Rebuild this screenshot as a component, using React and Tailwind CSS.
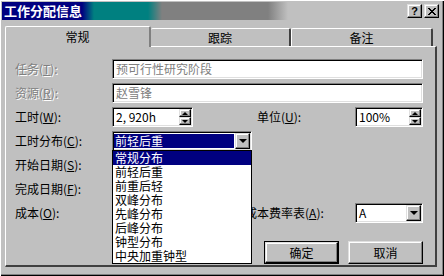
import React from 'react';

// Win98-style 3D edges
const sunken = "border border-t-[#808080] border-l-[#808080] border-b-white border-r-white shadow-[inset_1px_1px_0_#000,inset_-1px_-1px_0_#dfdfdf]";
const raised = "border border-t-[#dfdfdf] border-l-[#dfdfdf] border-b-black border-r-black shadow-[inset_-1px_-1px_0_#808080,inset_1px_1px_0_#fff]";

function Label({ text, keyChar, disabled, className = "" }) {
  return (
    <span
      className={`text-[12px] leading-[14px] whitespace-nowrap ${
        disabled ? "text-[#808080] [text-shadow:1px_1px_0_#fff]" : "text-black"
      } ${className}`}
    >
      {text}(<u>{keyChar}</u>):
    </span>
  );
}

function SpinArrows() {
  return (
    <div className="flex flex-col justify-center gap-0 py-px pr-px">
      <div className={`flex h-[8px] w-[12px] items-center justify-center bg-[#c0c0c0] ${raised}`}>
        <div className="h-0 w-0 border-b-[3px] border-l-[3px] border-r-[3px] border-b-black border-l-transparent border-r-transparent" />
      </div>
      <div className={`flex h-[8px] w-[12px] items-center justify-center bg-[#c0c0c0] ${raised}`}>
        <div className="h-0 w-0 border-t-[3px] border-l-[3px] border-r-[3px] border-t-black border-l-transparent border-r-transparent" />
      </div>
    </div>
  );
}

function Spinner({ value, width }) {
  return (
    <div className={`flex h-[20px] bg-white ${sunken} ${width}`}>
      <span className="flex-1 pl-[3px] pt-[2px] text-[12px] leading-[14px] text-black">{value}</span>
      <SpinArrows />
    </div>
  );
}

function DownButton() {
  return (
    <div className={`flex h-[16px] w-[15px] items-center justify-center bg-[#c0c0c0] ${raised}`}>
      <div className="h-0 w-0 border-t-[4px] border-l-[4px] border-r-[4px] border-t-black border-l-transparent border-r-transparent" />
    </div>
  );
}

const options = ["常规分布", "前轻后重", "前重后轻", "双峰分布", "先峰分布", "后峰分布", "钟型分布", "中央加重钟型"];

export default function App() {
  return (
    <div className="flex h-[276px] w-[444px] flex-col bg-[#c0c0c0] p-[2px] shadow-[inset_1px_1px_0_#fff,inset_-1px_-1px_0_#000,inset_-2px_-2px_0_#808080] [font-family:'Noto_Sans_CJK_SC',sans-serif]">
      {/* Title bar */}
      <div className="flex h-[18px] items-center justify-between bg-[linear-gradient(90deg,#000080_0px,#000080_80px,#008080_92px,#008080_146px,#808080_160px,#808080_266px,#c0c0c0_286px)] pl-[2px] pr-[3px]">
        <span className="text-[13px] font-bold leading-[16px] text-white">工作分配信息</span>
        <div className="flex gap-[2px]">
          <div className={`flex h-[14px] w-[15px] items-center justify-center bg-[#c0c0c0] ${raised}`}>
            <span className="text-[11px] font-bold leading-[11px] text-black [font-family:'Liberation_Sans',sans-serif]">?</span>
          </div>
          <div className={`flex h-[14px] w-[15px] items-center justify-center bg-[#c0c0c0] ${raised}`}>
            <svg width="8" height="7" viewBox="0 0 8 7">
              <path d="M0 0h2v1h1v1h2V1h1V0h2v1H7v1H6v1H5v1h1v1h1v1h1v1H6V6H5V5H3v1H2v1H0V6h1V5h1V4h1V3H2V2H1V1H0z" fill="#000" />
            </svg>
          </div>
        </div>
      </div>

      {/* Tabs */}
      <div className="mt-[6px] flex h-[20px] items-end pl-[3px]">
        <div className="relative z-10 -mb-px flex h-[21px] w-[146px] items-center justify-center rounded-t-[2px] border-l border-t border-r-2 border-l-white border-t-white border-r-[#808080] bg-[#c0c0c0] text-[12px] leading-[14px] text-black">
          常规
        </div>
        <div className="flex h-[18px] w-[140px] items-center justify-center rounded-t-[2px] border-t border-r-2 border-t-white border-r-[#404040] pt-px text-[12px] leading-[14px] text-black">
          跟踪
        </div>
        <div className="flex h-[18px] w-[142px] items-center justify-center rounded-t-[2px] border-l border-t border-r-2 border-l-white border-t-white border-r-[#404040] pt-px text-[12px] leading-[14px] text-black">
          备注
        </div>
      </div>

      {/* Panel */}
      <div className="ml-[3px] flex h-[221px] w-[432px] flex-col border-l border-t border-b-2 border-r-2 border-l-white border-t-white border-b-[#404040] border-r-[#404040] pl-[9px] pr-[12px] pt-[10px]">
        <div className="flex h-[24px] items-center">
          <Label text="任务" keyChar="T" disabled className="w-[97px]" />
          <div className={`flex h-[20px] w-[311px] items-center bg-white pl-[3px] text-[12px] leading-[14px] text-[#808080] ${sunken}`}>预可行性研究阶段</div>
        </div>
        <div className="flex h-[24px] items-center">
          <Label text="资源" keyChar="R" disabled className="w-[97px]" />
          <div className={`flex h-[20px] w-[311px] items-center bg-white pl-[3px] text-[12px] leading-[14px] text-[#808080] ${sunken}`}>赵雪锋</div>
        </div>
        <div className="flex h-[24px] items-center">
          <Label text="工时" keyChar="W" className="w-[97px]" />
          <Spinner value="2, 920h" width="w-[81px]" />
          <Label text="单位" keyChar="U" className="ml-[64px] w-[98px]" />
          <Spinner value="100%" width="w-[68px]" />
        </div>
        <div className="flex h-[24px] items-center">
          <Label text="工时分布" keyChar="C" className="w-[97px]" />
          <div className="relative z-20">
            <div className={`flex h-[20px] w-[140px] items-center gap-px bg-white pl-[1px] pr-px ${sunken}`}>
              <span className="flex h-[14px] flex-1 items-center bg-[#000080] pl-[1px] text-[12px] leading-[14px] text-white">前轻后重</span>
              <DownButton />
            </div>
            <div className="absolute left-0 top-[19px] w-[140px] border border-black bg-white">
              {options.map((o, i) => (
                <div
                  key={o}
                  className={`flex h-[14px] items-center pl-[2px] text-[12px] leading-[14px] ${
                    i === 0 ? "bg-[#000080] text-white" : "text-black"
                  }`}
                >
                  {o}
                </div>
              ))}
            </div>
          </div>
        </div>
        <div className="flex h-[24px] items-center">
          <Label text="开始日期" keyChar="S" className="w-[97px]" />
        </div>
        <div className="flex h-[24px] items-center">
          <Label text="完成日期" keyChar="F" className="w-[97px]" />
        </div>
        <div className="flex h-[24px] items-center">
          <Label text="成本" keyChar="O" className="w-[97px]" />
          <Label text="成本费率表" keyChar="A" className="ml-[133px] w-[110px]" />
          <div className={`flex h-[20px] w-[68px] items-center bg-white pl-[3px] pr-px ${sunken}`}>
            <span className="flex-1 text-[12px] leading-[14px] text-black">A</span>
            <DownButton />
          </div>
        </div>
        <div className="mt-[16px] flex justify-end gap-[9px]">
          <div className="h-[23px] w-[75px] border border-black">
            <div className={`flex h-full w-full items-center justify-center bg-[#c0c0c0] text-[12px] leading-[14px] text-black ${raised}`}>确定</div>
          </div>
          <div className={`flex h-[23px] w-[75px] items-center justify-center bg-[#c0c0c0] text-[12px] leading-[14px] text-black ${raised}`}>取消</div>
        </div>
      </div>
    </div>
  );
}
